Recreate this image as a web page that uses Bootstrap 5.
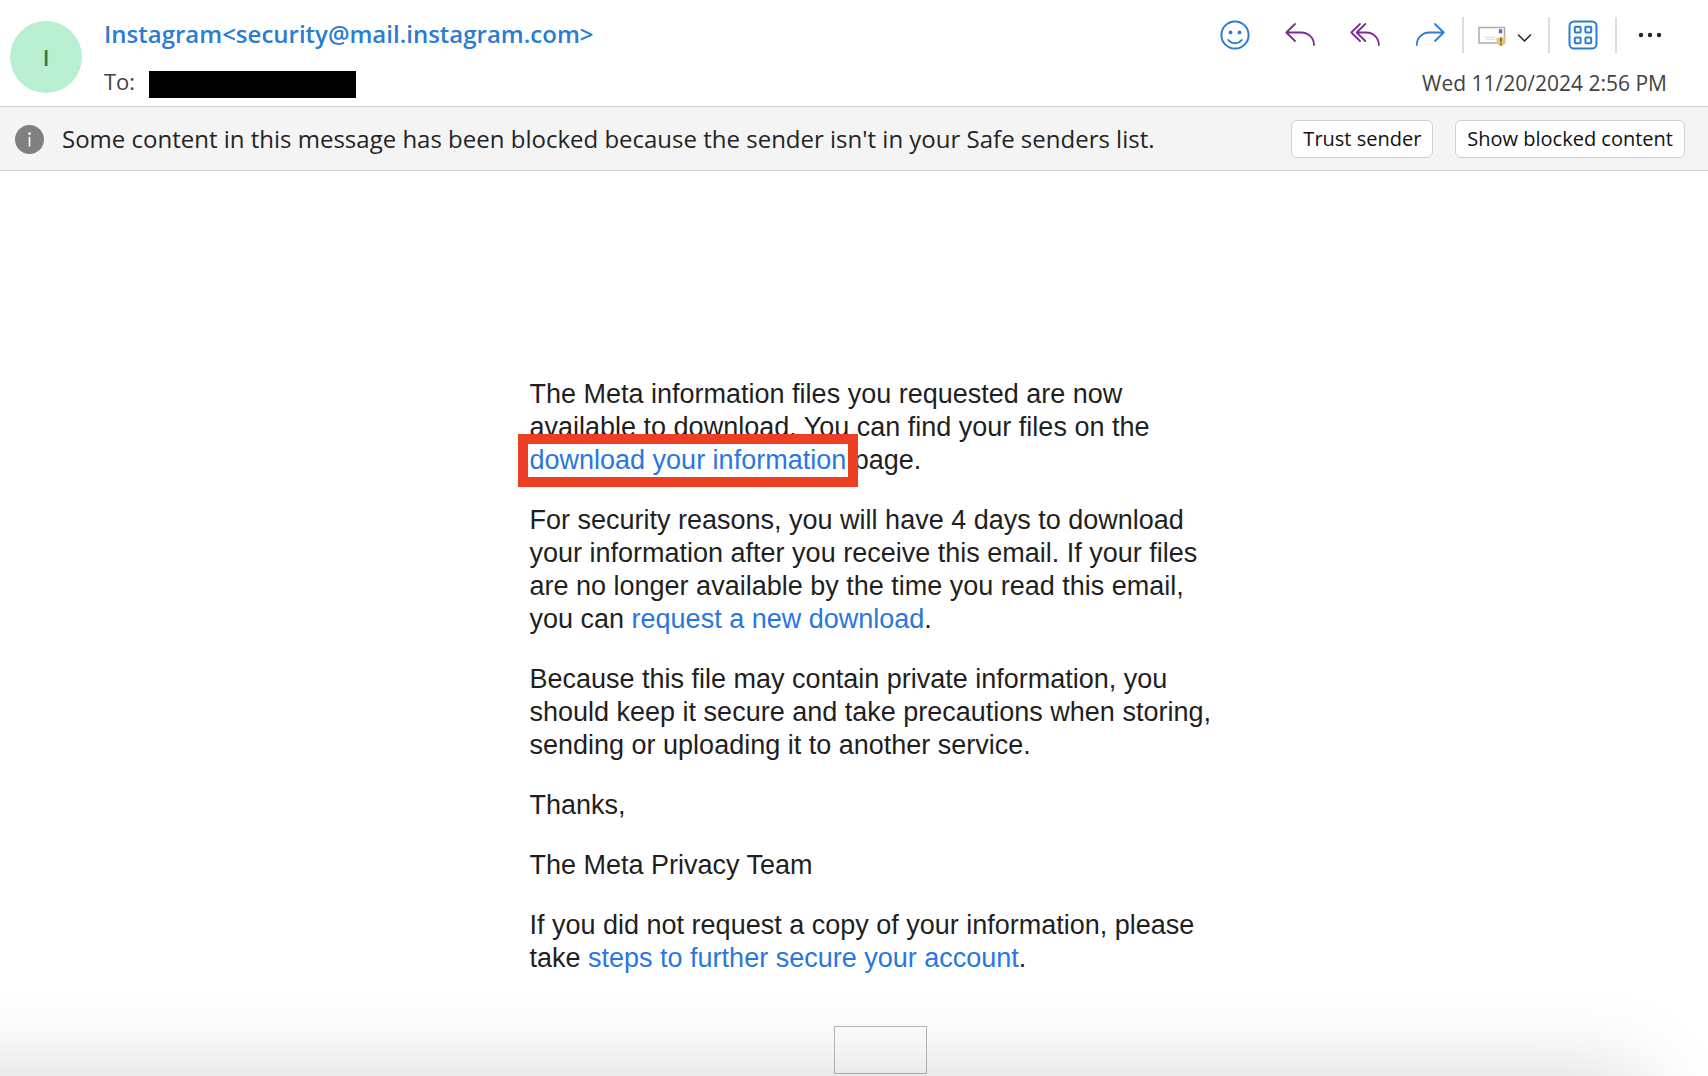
<!DOCTYPE html>
<html lang="en">
<head>
<meta charset="utf-8">
<meta name="viewport" content="width=device-width, initial-scale=1">
<title>Instagram message</title>
<link href="https://cdn.jsdelivr.net/npm/bootstrap@5.3.0/dist/css/bootstrap.min.css" rel="stylesheet">
<style>
body { font-family: "Open Sans", "Noto Sans", sans-serif; color: #242424; background: #fff; }
.msg-head { padding: 11px 26px 8px 10px; gap: 22px; }
.avatar { width: 72px; height: 72px; margin-top: 10px; background: #b8efd1; color: #2f7d4b; font-size: 22px; font-weight: 600; }
.sender { font-size: 24px; line-height: 46px; font-weight: 600; color: #2b7cd3; }
.recipient { font-size: 22px; line-height: 34px; margin-top: 7px; gap: 14px; color: #424242; }
.redacted { width: 207px; height: 27px; background: #000; }
.tools { padding-top: 6px; }
.tool { width: 65px; height: 36px; }
.tool-wide { width: 84px; }
.rule { width: 2px; height: 36px; background: #dcdcdc; }
.sent-at { font-size: 21px; line-height: 30px; color: #424242; padding: 15px 15px 0 0; }
.notice { background: #f4f4f4; border-top: 1px solid #d1d1d1; border-bottom: 1px solid #d1d1d1; padding: 13px 23px 12px 15px; gap: 22px; }
.notice-label { gap: 18px; }
.notice-text { font-size: 24px; line-height: 38px; }
.notice-btn { --bs-btn-font-size: 20px; --bs-btn-line-height: 28px; --bs-btn-padding-x: 11px; --bs-btn-padding-y: 4px; --bs-btn-bg: #fff; --bs-btn-color: #111; --bs-btn-border-color: #d1d1d1; --bs-btn-border-radius: 6px; }
.mail { padding: 207px 0 0 53px; }
.mail::after { content: ""; position: absolute; left: -120px; right: 64px; bottom: -200px; height: 200px; border-radius: 20px; box-shadow: 0 0 90px rgba(0, 0, 0, .17); }
.mail-body { max-width: 702px; font-family: "Liberation Sans", Arial, sans-serif; font-size: 27px; line-height: 33px; color: #1f1f1f; }
.mail-body p { margin-bottom: 27px; }
.mail-body a { color: #2a76e0; text-decoration: none; }
.marked::after { content: ""; position: absolute; inset: -10px -12px; border: 10px solid #ec3f24; }
.blocked-img { width: 93px; height: 48px; border: 1px solid #b8b8b8; margin-top: 51px; }
</style>
</head>
<body class="d-flex flex-column min-vh-100">
<header class="msg-head d-flex align-items-start">
  <div class="avatar rounded-circle d-flex align-items-center justify-content-center flex-shrink-0">I</div>
  <div>
    <a href="#" class="sender d-block text-decoration-none">Instagram&lt;security@mail.instagram.com&gt;</a>
    <div class="recipient d-flex align-items-end">To:<span class="redacted"></span></div>
  </div>
  <div class="ms-auto d-flex flex-column align-items-end">
    <div class="tools d-flex" role="toolbar" aria-label="Message actions">
      <button type="button" class="btn tool border-0 p-0 d-flex align-items-center justify-content-center" aria-label="React">
        <svg width="30" height="30" viewBox="0 0 30 30" fill="none" stroke="#2b7cd3" stroke-width="2" stroke-linecap="round"><circle cx="15" cy="15" r="13.6"/><path d="M8.3 20c3.3 4.2 10.100 4.200 13.400 0"/><g fill="#2b7cd3" stroke="none"><circle cx="10.500" cy="12.400" r="1.900"/><circle cx="19.500" cy="12.400" r="1.900"/></g></svg>
      </button>
      <button type="button" class="btn tool border-0 p-0 d-flex align-items-center justify-content-center" aria-label="Reply">
        <svg width="30" height="30" viewBox="0 0 30 30" fill="none" stroke="#7f2a96" stroke-width="1.800" stroke-linecap="round" stroke-linejoin="round"><path d="M10 4L1.300 12.500 10 21M1.500 12.500h14.500c7.500 0 13 5.500 13 12.500"/></svg>
      </button>
      <button type="button" class="btn tool border-0 p-0 d-flex align-items-center justify-content-center" aria-label="Reply all">
        <svg width="30" height="30" viewBox="0 0 30 30" fill="none" stroke="#7f2a96" stroke-width="1.800" stroke-linecap="round" stroke-linejoin="round"><path d="M10 4L1.300 12.500 10 21M15.300 4L6.600 12.500l8.700 8.500M7 12.500h9.500c7 0 12.300 5.500 12.300 12.500"/></svg>
      </button>
      <button type="button" class="btn tool border-0 p-0 d-flex align-items-center justify-content-center" aria-label="Forward">
        <svg width="30" height="30" viewBox="0 0 30 30" fill="none" stroke="#2b7cd3" stroke-width="1.800" stroke-linecap="round" stroke-linejoin="round"><path d="M20 4l8.700 8.500L20 21M28.500 12.500H14.500C7 12.500 1.800 18 1.800 25"/></svg>
      </button>
      <span class="rule"></span>
      <button type="button" class="btn tool tool-wide border-0 p-0 d-flex align-items-center justify-content-center" aria-label="Report message">
        <svg width="56" height="30" viewBox="0 0 56 30" fill="none"><rect x="1" y="7.500" width="25.500" height="15.500" fill="#fff" stroke="#adadad" stroke-width="1.500"/><path d="M6.500 17.300h11M8 19.500h9" stroke="#dedede" stroke-width="1.200"/><path d="M20.800 9.300h3.400v4h-3.400z" fill="#3f78bd"/><path d="M18.300 18c2 0 3.500-.8 4.700-1.800 1.200 1 2.600 1.800 4.600 1.800 0 4.500-1.200 7-4.600 8.800-3.400-1.800-4.700-4.300-4.700-8.800z" fill="#e8c47a"/><path d="M23 17.800v4.500M23 23.300v1.700" stroke="#6b5738" stroke-width="1.500"/><path d="M40.500 15l6 6 6-6" stroke="#242424" stroke-width="1.500" stroke-linecap="round" stroke-linejoin="round"/></svg>
      </button>
      <span class="rule"></span>
      <button type="button" class="btn tool border-0 p-0 d-flex align-items-center justify-content-center" aria-label="Apps">
        <svg width="30" height="30" viewBox="0 0 30 30" fill="none" stroke="#2b7cd3" stroke-width="2"><rect x="1.500" y="1.500" width="27" height="27" rx="4.500"/><g><rect x="6.800" y="6.800" width="5.800" height="5.800" rx="1"/><rect x="17.400" y="6.800" width="5.800" height="5.800" rx="1"/><rect x="6.800" y="17.400" width="5.800" height="5.800" rx="1"/><rect x="17.400" y="17.400" width="5.800" height="5.800" rx="1"/></g></svg>
      </button>
      <span class="rule"></span>
      <button type="button" class="btn tool border-0 p-0 d-flex align-items-center justify-content-center" aria-label="More actions">
        <svg width="30" height="30" viewBox="0 0 30 30" fill="#242424"><circle cx="6" cy="15" r="2.200"/><circle cx="15" cy="15" r="2.200"/><circle cx="24" cy="15" r="2.200"/></svg>
      </button>
    </div>
    <div class="sent-at">Wed 11/20/2024 2:56 PM</div>
  </div>
</header>
<section class="notice d-flex align-items-center" aria-label="Blocked content">
  <div class="notice-label d-flex align-items-center flex-grow-1">
    <svg class="flex-shrink-0" width="29" height="29" viewBox="0 0 29 29"><circle cx="14.500" cy="14.500" r="14.500" fill="#808080"/><path d="M14.500 12v9.500" stroke="#fff" stroke-width="1.600"/><circle cx="14.500" cy="8.600" r="1.300" fill="#fff"/></svg>
    <span class="notice-text">Some content in this message has been blocked because the sender isn't in your Safe senders list.</span>
  </div>
  <button type="button" class="btn notice-btn">Trust sender</button>
  <button type="button" class="btn notice-btn">Show blocked content</button>
</section>
<main class="mail position-relative overflow-hidden flex-grow-1">
  <article class="mail-body mx-auto">
    <p>The Meta information files you requested are now available to download. You can find your files on the <a href="#" class="marked position-relative d-inline-block">download your information</a> page.</p>
    <p>For security reasons, you will have 4 days to download your information after you receive this email. If your files are no longer available by the time you read this email, you can <a href="#">request a new download</a>.</p>
    <p>Because this file may contain private information, you should keep it secure and take precautions when storing, sending or uploading it to another service.</p>
    <p>Thanks,</p>
    <p>The Meta Privacy Team</p>
    <p class="mb-0">If you did not request a copy of your information, please take <a href="#">steps to further secure your account</a>.</p>
    <div class="blocked-img mx-auto"></div>
  </article>
</main>
<script src="https://cdn.jsdelivr.net/npm/bootstrap@5.3.0/dist/js/bootstrap.bundle.min.js"></script>
</body>
</html>
